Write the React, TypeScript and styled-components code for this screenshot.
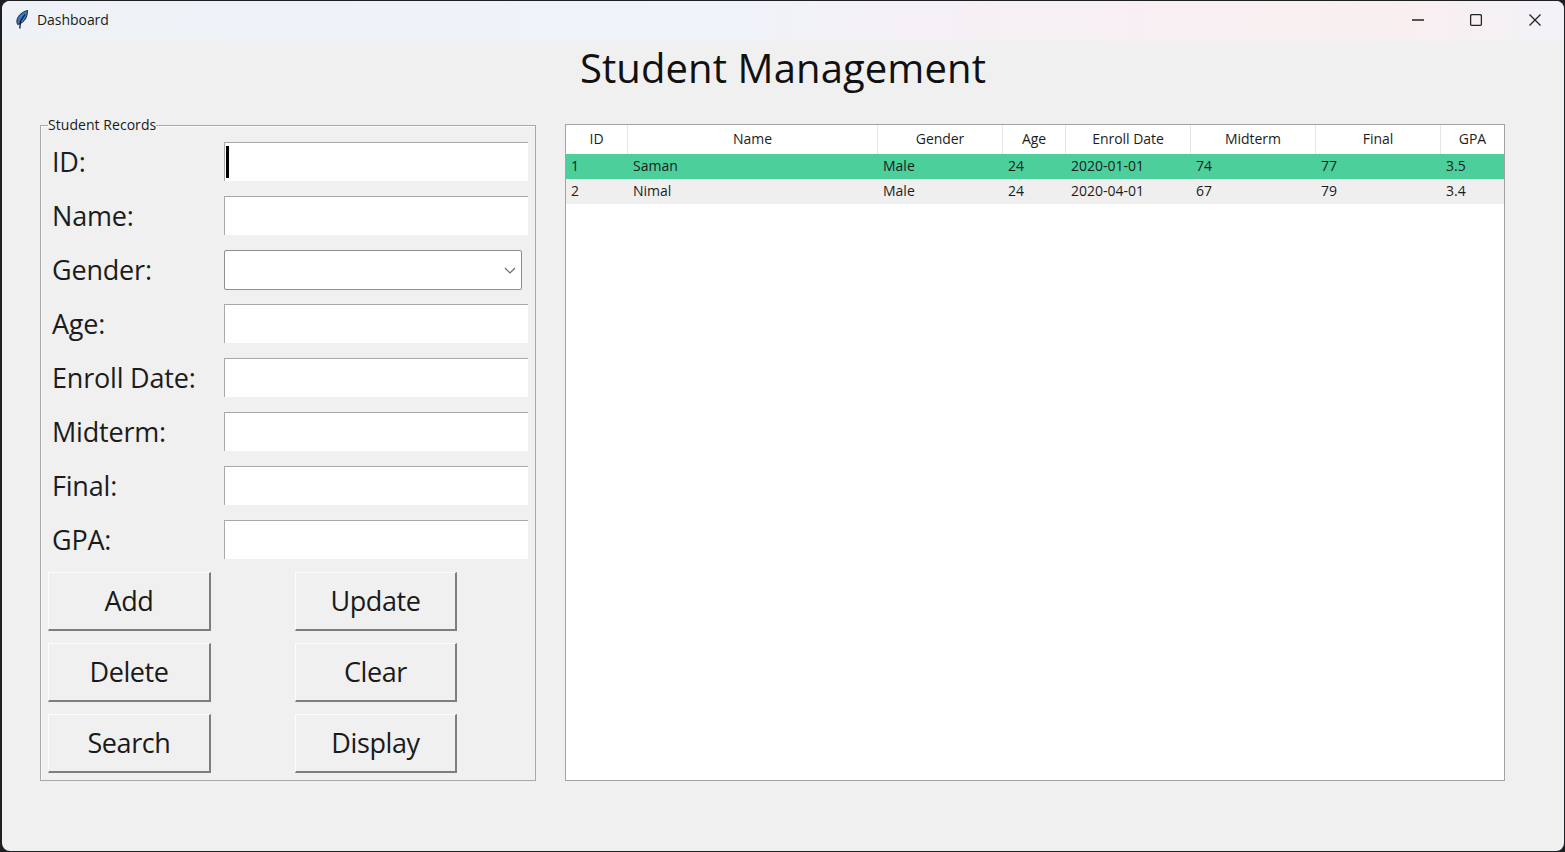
import React from 'react';
import styled, { createGlobalStyle } from 'styled-components';

const GlobalStyle = createGlobalStyle`
  html,
  body {
    margin: 0;
    padding: 0;
    height: 852px;
    overflow: hidden;
    background: #1d1f22;
  }
`;

const Desktop = styled.div`
  width: 1565px;
  height: 852px;
  box-sizing: border-box;
  padding: 1px 1px 1px 2px;
  font-family: 'Open Sans', 'Noto Sans', sans-serif;
  color: #1a1a1a;
`;

const Window = styled.div`
  height: 100%;
  display: flex;
  flex-direction: column;
  background: #f0f0f0;
  border-radius: 8px;
  overflow: hidden;
`;

const TitleBar = styled.header`
  height: 39px;
  flex: none;
  display: flex;
  align-items: center;
  padding-left: 12px;
  background: linear-gradient(90deg, #eef2f7 0%, #eff3fa 45%, #f6f0f5 62%, #f9eff0 90%, #f2f2f8 100%);
`;

const WindowTitle = styled.span`
  margin: -2px 0 0 5px;
  font-size: 14px;
  letter-spacing: -0.05px;
  flex: 1;
`;

const WindowButton = styled.button`
  width: 59px;
  height: 39px;
  padding: 0 0 2px;
  border: none;
  background: none;
  display: flex;
  align-items: center;
  justify-content: center;
`;

const MinimizeButton = styled(WindowButton)`
  padding-left: 2px;
`;

const PageTitle = styled.h1`
  margin: 0;
  height: 65px;
  font-size: 40px;
  line-height: 56px;
  font-weight: 400;
  letter-spacing: 0.1px;
  text-align: center;
  color: #111;
`;

const Content = styled.main`
  display: flex;
  align-items: flex-start;
  padding: 0 0 0 38px;
  gap: 29px;
`;

const RecordsFrame = styled.fieldset`
  width: 496px;
  height: 663px;
  margin: 13px 0 0;
  padding: 10px 0 0 6px;
  box-sizing: border-box;
  border: 1px solid #a8a8a8;
  box-shadow: inset 1px 1px 0 #fbfbfb;
`;

const RecordsLegend = styled.legend`
  margin-left: 1px;
  padding: 0;
  font-size: 14px;
  line-height: 14px;
  letter-spacing: 0.05px;
`;

const FieldRow = styled.div`
  display: flex;
  align-items: center;
  height: 38px;
  margin-bottom: 16px;
`;

const FieldLabel = styled.label`
  width: 177px;
  padding-left: 5px;
  box-sizing: border-box;
  font-size: 27px;
  letter-spacing: -0.2px;
  white-space: nowrap;
  color: #1c1c1c;
`;

const EntryBox = styled.div<{ $focused?: boolean }>`
  position: relative;
  align-self: flex-start;
  width: 304px;
  height: 39px;
  box-sizing: border-box;
  background: #fff;
  border-top: 1px solid #a9a9a9;
  border-left: 1px solid #a9a9a9;

  ${(p) =>
    p.$focused &&
    `&::after {
      content: '';
      position: absolute;
      left: 1px;
      top: 3px;
      width: 2.5px;
      height: 32px;
      background: #000;
    }`}
`;

const ComboBox = styled.div`
  width: 298px;
  height: 40px;
  margin-top: 2px;
  box-sizing: border-box;
  background: #fff;
  border: 1px solid #8f8f8f;
  border-radius: 2px;
  display: flex;
  align-items: center;
  justify-content: flex-end;
  padding-right: 3px;
`;

const ButtonGrid = styled.div`
  display: grid;
  grid-template-columns: 163px 162px;
  grid-auto-rows: 59px;
  column-gap: 84px;
  row-gap: 12px;
  margin: -2px 0 0 1px;
`;

const ActionButton = styled.button`
  padding: 0 0 2px;
  background: #f0f0f0;
  border: 1px solid #f0f0f0;
  border-top-color: #fdfdfd;
  border-left-color: #fdfdfd;
  border-right: 2px solid #7e7e7e;
  border-bottom: 2px solid #7e7e7e;
  font-family: inherit;
  font-size: 27px;
  letter-spacing: -0.4px;
  color: #1a1a1a;
`;

const TablePanel = styled.section`
  width: 940px;
  height: 657px;
  margin-top: 19px;
  box-sizing: border-box;
  background: #fff;
  border: 1px solid #a0a4a8;
  font-size: 14px;
`;

const TABLE_COLUMNS = '62px 250px 125px 63px 125px 125px 125px 63px';

const HeaderRow = styled.div`
  display: grid;
  grid-template-columns: ${TABLE_COLUMNS};
  height: 29px;
`;

const HeaderCell = styled.div`
  display: flex;
  align-items: center;
  justify-content: center;
  padding-bottom: 2px;
  box-sizing: border-box;
  letter-spacing: -0.05px;
  border-right: 1px solid #e5e5e5;
  color: #1c1c1c;
  &:last-child {
    border-right: none;
  }
`;

const DataRow = styled.div<{ $selected?: boolean }>`
  display: grid;
  grid-template-columns: ${TABLE_COLUMNS};
  height: 25px;
  align-items: center;
  background: ${(p) => (p.$selected ? '#4dcf9b' : '#efefef')};
`;

const DataCell = styled.div`
  padding: 0 0 2px 5px;
  white-space: nowrap;
  color: #1c1c1c;
`;

const columns = ['ID', 'Name', 'Gender', 'Age', 'Enroll Date', 'Midterm', 'Final', 'GPA'];

const students = [
  ['1', 'Saman', 'Male', '24', '2020-01-01', '74', '77', '3.5'],
  ['2', 'Nimal', 'Male', '24', '2020-04-01', '67', '79', '3.4'],
];

const fields = ['ID', 'Name', 'Gender', 'Age', 'Enroll Date', 'Midterm', 'Final', 'GPA'];

const actions = ['Add', 'Update', 'Delete', 'Clear', 'Search', 'Display'];

function FeatherIcon() {
  return (
    <svg width="18" height="22" viewBox="0 0 18 22">
      <path d="M13.500 .5C9 1.500 4 5 3 10c-.3 2-.1 3 .7 4.500C7 14 10.500 11 12 8c1-2.500 1.500-5 1.500-7.500Z" fill="#3a78c8" stroke="#16243a" strokeWidth="1" />
      <path d="M11 4.500 6.500 11 5.800 18.500" fill="none" stroke="#0d1420" strokeWidth="1.300" />
    </svg>
  );
}

export default function App() {
  return (
    <Desktop>
      <GlobalStyle />
      <Window>
        <TitleBar>
          <FeatherIcon />
          <WindowTitle>Dashboard</WindowTitle>
          <MinimizeButton aria-label="Minimize">
            <svg width="12" height="12" viewBox="0 0 12 12">
              <path d="M0 6h12" stroke="#222" strokeWidth="1.300" />
            </svg>
          </MinimizeButton>
          <WindowButton aria-label="Maximize">
            <svg width="12" height="12" viewBox="0 0 12 12">
              <rect x="0.600" y="0.600" width="10.800" height="10.800" rx="1.500" fill="none" stroke="#222" strokeWidth="1.300" />
            </svg>
          </WindowButton>
          <WindowButton aria-label="Close">
            <svg width="12" height="12" viewBox="0 0 12 12">
              <path d="M0.500 0.500l11 11M11.500 0.500l-11 11" stroke="#222" strokeWidth="1.300" />
            </svg>
          </WindowButton>
        </TitleBar>
        <PageTitle>Student Management</PageTitle>
        <Content>
          <RecordsFrame>
            <RecordsLegend>Student Records</RecordsLegend>
            {fields.map((field, i) => (
              <FieldRow key={field}>
                <FieldLabel>{field}:</FieldLabel>
                {field === 'Gender' ? (
                  <ComboBox>
                    <svg width="16" height="16" viewBox="0 0 16 16">
                      <path d="M3 6l5 5 5-5" fill="none" stroke="#6a6a6a" strokeWidth="1.200" />
                    </svg>
                  </ComboBox>
                ) : (
                  <EntryBox $focused={i === 0} />
                )}
              </FieldRow>
            ))}
            <ButtonGrid>
              {actions.map((action) => (
                <ActionButton key={action}>{action}</ActionButton>
              ))}
            </ButtonGrid>
          </RecordsFrame>
          <TablePanel>
            <HeaderRow>
              {columns.map((column) => (
                <HeaderCell key={column}>{column}</HeaderCell>
              ))}
            </HeaderRow>
            {students.map((student, i) => (
              <DataRow key={student[0]} $selected={i === 0}>
                {student.map((value, j) => (
                  <DataCell key={j}>{value}</DataCell>
                ))}
              </DataRow>
            ))}
          </TablePanel>
        </Content>
      </Window>
    </Desktop>
  );
}
